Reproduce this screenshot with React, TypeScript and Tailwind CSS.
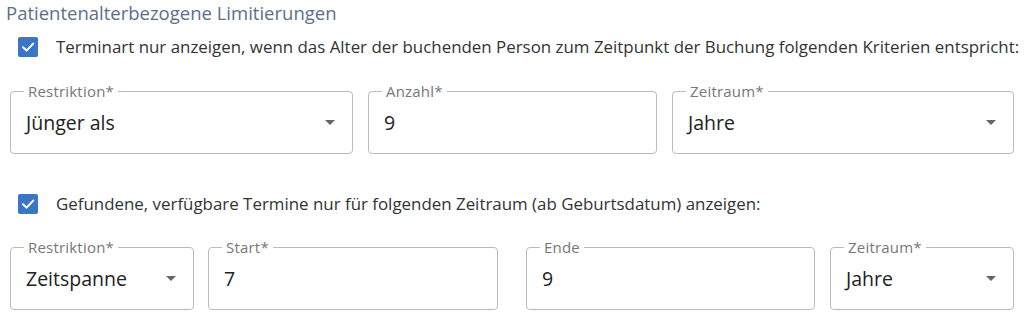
import React from "react";

const CheckIcon = () => (
  <svg viewBox="0 0 20 20" className="w-[20px] h-[20px] shrink-0">
    <rect x="0" y="0" width="20" height="20" rx="2" fill="#3b76c6" />
    <path d="M5 10.2 L8.6 13.6 L15.2 6.6" fill="none" stroke="#fff" strokeWidth="2" strokeLinecap="round" strokeLinejoin="round" />
  </svg>
);

const Caret = () => (
  <svg viewBox="0 0 10 5" className="w-[10px] h-[5px]">
    <path d="M0 0 L10 0 L5 5 Z" fill="#666" />
  </svg>
);

type FieldProps = {
  label: string;
  value: string;
  select?: boolean;
  className?: string;
};

const Field = ({ label, value, select, className }: FieldProps) => (
  <div className={`relative h-[63px] rounded border border-[#bcbcbc] flex items-center pl-[15px] pr-[17px] ${className ?? ""}`}>
    <span className="absolute -top-[10px] left-[13px] bg-white px-[4px] text-[15px] leading-[18px] tracking-[0.2px] text-[#777]">
      {label}
    </span>
    <span className="flex-1 text-[19.5px] text-[#222]">{value}</span>
    {select && <Caret />}
  </div>
);

const CheckRow = ({ text }: { text: string }) => (
  <label className="flex items-center gap-[18px] pl-[18px] h-[24px]">
    <CheckIcon />
    <span className="whitespace-nowrap text-[16.9px] leading-[24px] text-[#333]">{text}</span>
  </label>
);

export default function App() {
  return (
    <div className="w-[1024px] h-[320px] overflow-hidden bg-white pl-[10px] pr-[10px] font-['Open_Sans',sans-serif]">
      <h2 className="-ml-[4px] pt-[1px] text-[18.5px] leading-[24px] text-[#5b6f8b]">
        Patientenalterbezogene Limitierungen
      </h2>
      <div className="-ml-[10px] mt-[10px]">
        <CheckRow text="Terminart nur anzeigen, wenn das Alter der buchenden Person zum Zeitpunkt der Buchung folgenden Kriterien entspricht:" />
      </div>
      <div className="flex mt-[32px]">
        <Field label="Restriktion*" value="Jünger als" select className="w-[343px]" />
        <Field label="Anzahl*" value="9" className="w-[289px] ml-[15px]" />
        <Field label="Zeitraum*" value="Jahre" select className="flex-1 ml-[15px]" />
      </div>
      <div className="-ml-[10px] mt-[38px]">
        <CheckRow text="Gefundene, verfügbare Termine nur für folgenden Zeitraum (ab Geburtsdatum) anzeigen:" />
      </div>
      <div className="flex mt-[31px]">
        <Field label="Restriktion*" value="Zeitspanne" select className="w-[184px]" />
        <Field label="Start*" value="7" className="w-[290px] ml-[14px]" />
        <Field label="Ende" value="9" className="w-[289px] ml-[28px]" />
        <Field label="Zeitraum*" value="Jahre" select className="flex-1 ml-[15px]" />
      </div>
    </div>
  );
}
